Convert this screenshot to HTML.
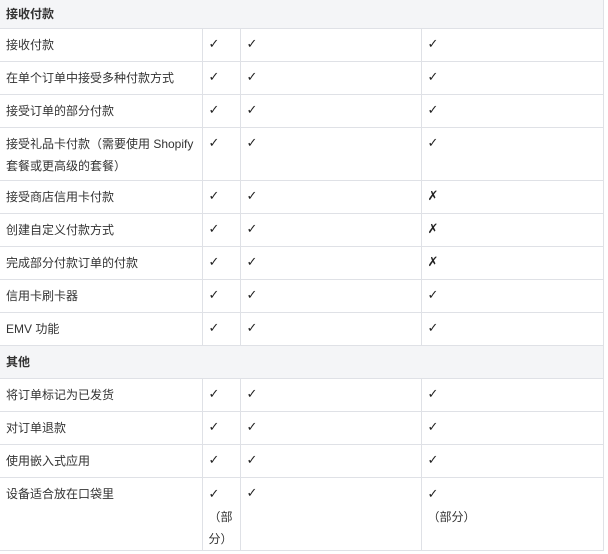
<!DOCTYPE html>
<html><head><meta charset="utf-8"><style>
body{margin:0;background:#fff;font-family:"Liberation Sans","Noto Sans CJK SC",sans-serif;font-size:12px;color:#333;}
table{border-collapse:collapse;table-layout:fixed;width:603px;position:absolute;left:0;top:0;}
td{border:1px solid #dfe1e6;padding:5px 6px 0 6px;line-height:22px;vertical-align:top;word-break:break-all;}
tr.h td{background:#f4f5f7;font-weight:bold;padding:3px 6px 0 6px;height:25px;border-left:none;border-top:none;}
tr.h2 td{height:27px;padding-top:5px}
tr.r td{height:27px}
tr.r td:first-child{border-left:none}
.c{font-family:"DejaVu Sans",sans-serif;font-weight:bold;font-size:13px;color:#222}
</style></head><body>
<table>
<colgroup><col style="width:202px"><col style="width:38px"><col style="width:181px"><col style="width:182px"></colgroup>
<tr class="h"><td colspan="4">接收付款</td></tr>
<tr class="r"><td>接收付款</td><td class="c">✓</td><td class="c">✓</td><td class="c">✓</td></tr>
<tr class="r"><td>在单个订单中接受多种付款方式</td><td class="c">✓</td><td class="c">✓</td><td class="c">✓</td></tr>
<tr class="r"><td>接受订单的部分付款</td><td class="c">✓</td><td class="c">✓</td><td class="c">✓</td></tr>
<tr class="r"><td style="height:47px">接受礼品卡付款（需要使用 Shopify 套餐或更高级的套餐）</td><td class="c">✓</td><td class="c">✓</td><td class="c">✓</td></tr>
<tr class="r"><td>接受商店信用卡付款</td><td class="c">✓</td><td class="c">✓</td><td class="c">✗</td></tr>
<tr class="r"><td>创建自定义付款方式</td><td class="c">✓</td><td class="c">✓</td><td class="c">✗</td></tr>
<tr class="r"><td>完成部分付款订单的付款</td><td class="c">✓</td><td class="c">✓</td><td class="c">✗</td></tr>
<tr class="r"><td>信用卡刷卡器</td><td class="c">✓</td><td class="c">✓</td><td class="c">✓</td></tr>
<tr class="r"><td>EMV 功能</td><td class="c">✓</td><td class="c">✓</td><td class="c">✓</td></tr>
<tr class="h h2"><td colspan="4">其他</td></tr>
<tr class="r"><td>将订单标记为已发货</td><td class="c">✓</td><td class="c">✓</td><td class="c">✓</td></tr>
<tr class="r"><td>对订单退款</td><td class="c">✓</td><td class="c">✓</td><td class="c">✓</td></tr>
<tr class="r"><td>使用嵌入式应用</td><td class="c">✓</td><td class="c">✓</td><td class="c">✓</td></tr>
<tr class="r"><td style="height:66px">设备适合放在口袋里</td><td><span class="c">✓</span><br>（部分）</td><td class="c">✓</td><td><span class="c">✓</span><br>（部分）</td></tr>
</table>
</body></html>
